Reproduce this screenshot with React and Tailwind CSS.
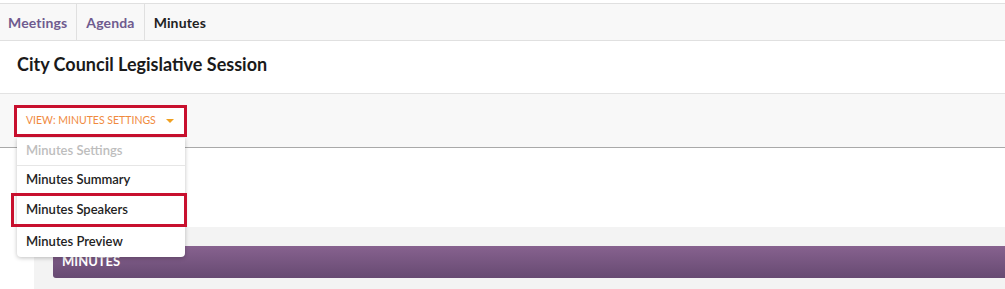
import React from "react";

const tabs = [
  { label: "Meetings", active: false },
  { label: "Agenda", active: false },
  { label: "Minutes", active: true },
];

const menuItems = [
  { label: "Minutes Settings", disabled: true, h: "h-[28px] pb-[1px] border-b border-[#e6e6e6]" },
  { label: "Minutes Summary", h: "h-[27px]" },
  { label: "Minutes Speakers", highlight: true, h: "h-[34px]" },
  { label: "Minutes Preview", h: "h-[30px]" },
];

const App = () => {
  return (
    <div className="w-[1005px] h-[289px] overflow-hidden bg-white font-['Lato','Liberation_Sans',sans-serif] relative">
      {/* onglets */}
      <div className="mt-[3px] h-[38px] flex bg-[#f8f8f8] border-y border-[#e0e0e0]">
        {tabs.map((t, i) => (
          <div
            key={t.label}
            className={`flex items-center text-[14px] font-bold ${i === 0 ? "pl-[8px] pr-[9px]" : "px-[9px]"} ${
              i < tabs.length - 1 ? "border-r border-[#e0e0e0]" : ""
            } ${t.active ? "text-[#222]" : "text-[#6f5b8f]"}`}
          >
            <span className="tracking-[0.15px]">{t.label}</span>
          </div>
        ))}
      </div>

      {/* titre */}
      <div className="h-[53px] flex items-center px-[17px] border-b border-[#e3e3e3]">
        <h1 className="text-[18px] font-bold text-[#1a1a1a] -mt-[6px]">
          City Council Legislative Session
        </h1>
      </div>

      {/* barre d'outils */}
      <div className="relative h-[54px] bg-[#f8f8f8] border-b border-[#a9a9a9] px-[14px] pt-[11px]">
        <button className="w-[173px] h-[32px] bg-white border-[3px] border-[#c8102e] flex items-center justify-between pl-[9px] pr-[10px] text-[10.5px] font-normal text-[#f08a3e]">
          <span>VIEW: MINUTES SETTINGS</span>
          <span className="w-0 h-0 border-x-[4px] border-x-transparent border-t-[4px] border-t-[#f0a020]" />
        </button>

        {/* menu déroulant */}
        <div className="absolute left-[17px] top-[44px] w-[168px] bg-white rounded-b-[4px] shadow-[0_1px_4px_rgba(0,0,0,0.25)] z-10 flex flex-col">
          {menuItems.map((item) => (
            <div
              key={item.label}
              className={`relative flex items-center px-[9px] text-[13px] font-semibold ${item.h} ${
                item.disabled ? "text-[#bdbdbd]" : "text-[#222]"
              }`}
            >
              {item.label}
              {item.highlight && (
                <div className="absolute -left-[6px] top-0 w-[176px] h-[34px] border-[3px] border-[#c8102e]" />
              )}
            </div>
          ))}
        </div>
      </div>

      {/* contenu */}
      <div className="pt-[79px]">
        <div className="ml-[34px] bg-[#f3f3f3] h-[70px] pt-[19px] pl-[19px]">
          <div className="h-[32px] rounded-l-[3px] bg-gradient-to-b from-[#87628f] to-[#674a72] flex items-center px-[9px] text-white text-[13px] font-bold uppercase">
            Minutes
          </div>
        </div>
      </div>
    </div>
  );
};

export default App;
